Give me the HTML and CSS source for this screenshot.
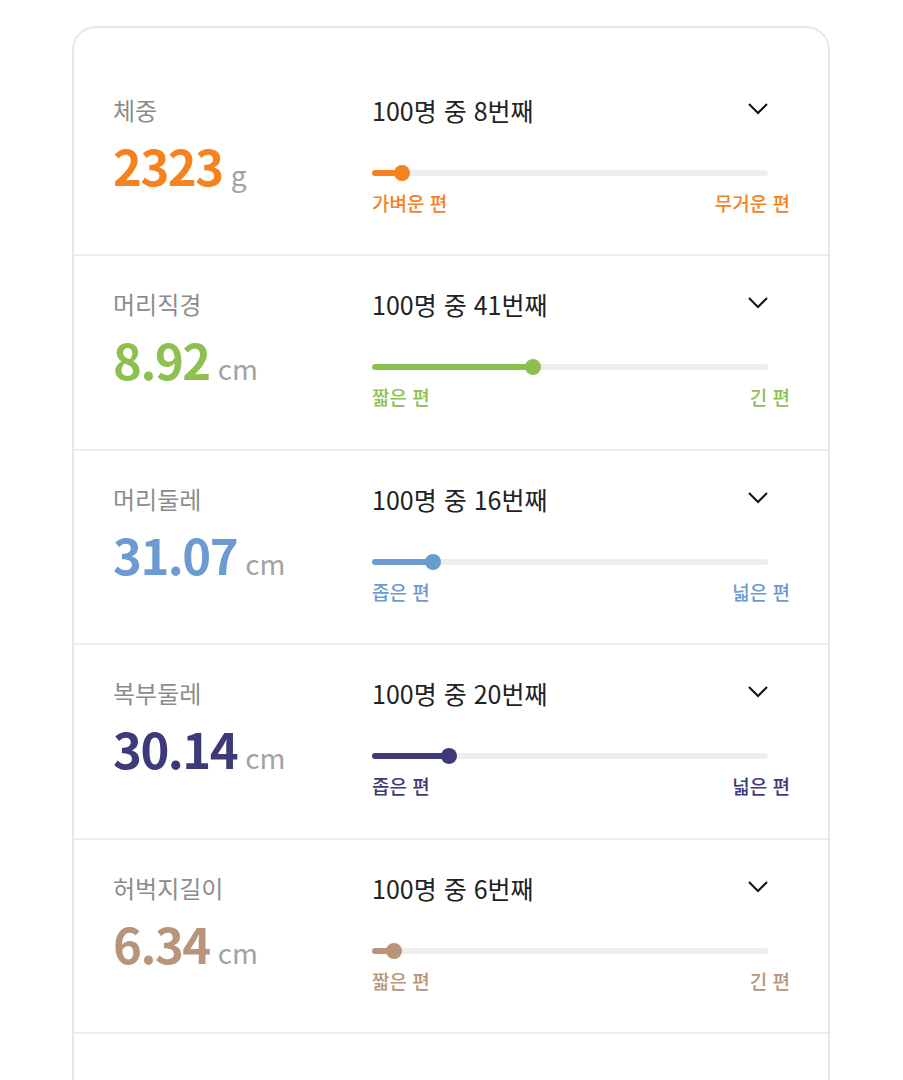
FILE: index.html
```html
<!DOCTYPE html>
<html lang="ko">
  <head>
    <meta charset="UTF-8" />
    <title>성장 기록</title>
    <link rel="stylesheet" href="styles.css">
  </head>
  <body>
    <div class="card">
      <div class="row orange">
        <div class="info">
          <div class="name">체중</div>
          <div class="value">2323<span class="unit">g</span></div>
        </div>
        <div class="rank">
          <div class="rank-head">
            <span>100명 중 8번째</span>
            <svg class="chevron" viewBox="0 0 20 12"><polyline points="1,1 10,10 19,1" /></svg>
          </div>
          <div class="track"><div class="fill" style="width: 7.6%"></div></div>
          <div class="ends"><span>가벼운 편</span><span>무거운 편</span></div>
        </div>
      </div>

      <div class="row green">
        <div class="info">
          <div class="name">머리직경</div>
          <div class="value">8.92<span class="unit">cm</span></div>
        </div>
        <div class="rank">
          <div class="rank-head">
            <span>100명 중 41번째</span>
            <svg class="chevron" viewBox="0 0 20 12"><polyline points="1,1 10,10 19,1" /></svg>
          </div>
          <div class="track"><div class="fill" style="width: 40.6%"></div></div>
          <div class="ends"><span>짧은 편</span><span>긴 편</span></div>
        </div>
      </div>

      <div class="row blue">
        <div class="info">
          <div class="name">머리둘레</div>
          <div class="value">31.07<span class="unit">cm</span></div>
        </div>
        <div class="rank">
          <div class="rank-head">
            <span>100명 중 16번째</span>
            <svg class="chevron" viewBox="0 0 20 12"><polyline points="1,1 10,10 19,1" /></svg>
          </div>
          <div class="track"><div class="fill" style="width: 15.4%"></div></div>
          <div class="ends"><span>좁은 편</span><span>넓은 편</span></div>
        </div>
      </div>

      <div class="row navy">
        <div class="info">
          <div class="name">복부둘레</div>
          <div class="value">30.14<span class="unit">cm</span></div>
        </div>
        <div class="rank">
          <div class="rank-head">
            <span>100명 중 20번째</span>
            <svg class="chevron" viewBox="0 0 20 12"><polyline points="1,1 10,10 19,1" /></svg>
          </div>
          <div class="track"><div class="fill" style="width: 19.5%"></div></div>
          <div class="ends"><span>좁은 편</span><span>넓은 편</span></div>
        </div>
      </div>

      <div class="row brown">
        <div class="info">
          <div class="name">허벅지길이</div>
          <div class="value">6.34<span class="unit">cm</span></div>
        </div>
        <div class="rank">
          <div class="rank-head">
            <span>100명 중 6번째</span>
            <svg class="chevron" viewBox="0 0 20 12"><polyline points="1,1 10,10 19,1" /></svg>
          </div>
          <div class="track"><div class="fill" style="width: 5.6%"></div></div>
          <div class="ends"><span>짧은 편</span><span>긴 편</span></div>
        </div>
      </div>

      <div class="row empty"></div>
    </div>
  </body>
</html>
```

FILE: styles.css
```css
body {
  margin: 0;
  background: #fff;
  font-family: "Noto Sans CJK KR", "Noto Sans", sans-serif;
  overflow: hidden;
}

.card {
  margin: 26px 0 0 72px;
  width: 758px;
  box-sizing: border-box;
  border: 2px solid #e8e8e8;
  border-bottom: none;
  border-radius: 24px 24px 0 0;
  padding-top: 34px;
}

.row {
  display: flex;
  padding: 31px 38px 36px 39px;
  border-bottom: 2px solid #ececec;
  height: 125.5px;
}

.row:first-child {
  height: 125px;
}

.row.empty {
  border-bottom: none;
  height: 100px;
}

.info {
  width: 259px;
  flex-shrink: 0;
}

.name {
  font-size: 24px;
  line-height: 34px;
  color: #8c8c8c;
}

.value {
  margin-top: 8px;
  font-size: 49px;
  line-height: 60px;
  font-weight: 700;
  letter-spacing: -1.5px;
}

.unit {
  font-size: 28px;
  font-weight: 400;
  color: #a3a3a3;
  margin-left: 8px;
  letter-spacing: 0;
}

.rank {
  flex: 1;
}

.rank-head {
  display: flex;
  justify-content: space-between;
  align-items: center;
  width: 396px;
  font-size: 25px;
  line-height: 34px;
  color: #222;
}

.chevron {
  width: 20px;
  height: 12px;
  fill: none;
  stroke: #111;
  stroke-width: 2;
  margin-bottom: 2px;
}

.track {
  margin-top: 43px;
  width: 396px;
  height: 6px;
  border-radius: 3px;
  background: #eeeeee;
}

.fill {
  position: relative;
  height: 100%;
  border-radius: 3px;
  background: currentColor;
}

.fill::after {
  content: "";
  position: absolute;
  right: -8px;
  top: -5px;
  width: 16px;
  height: 16px;
  border-radius: 50%;
  background: currentColor;
}

.ends {
  display: flex;
  justify-content: space-between;
  margin-top: 14px;
  font-size: 19px;
  line-height: 26px;
  font-weight: 500;
}

.orange { color: #f5821f; }
.green { color: #8cc152; }
.blue { color: #6c9bd2; }
.navy { color: #3e3a7a; }
.brown { color: #b8957a; }
```
